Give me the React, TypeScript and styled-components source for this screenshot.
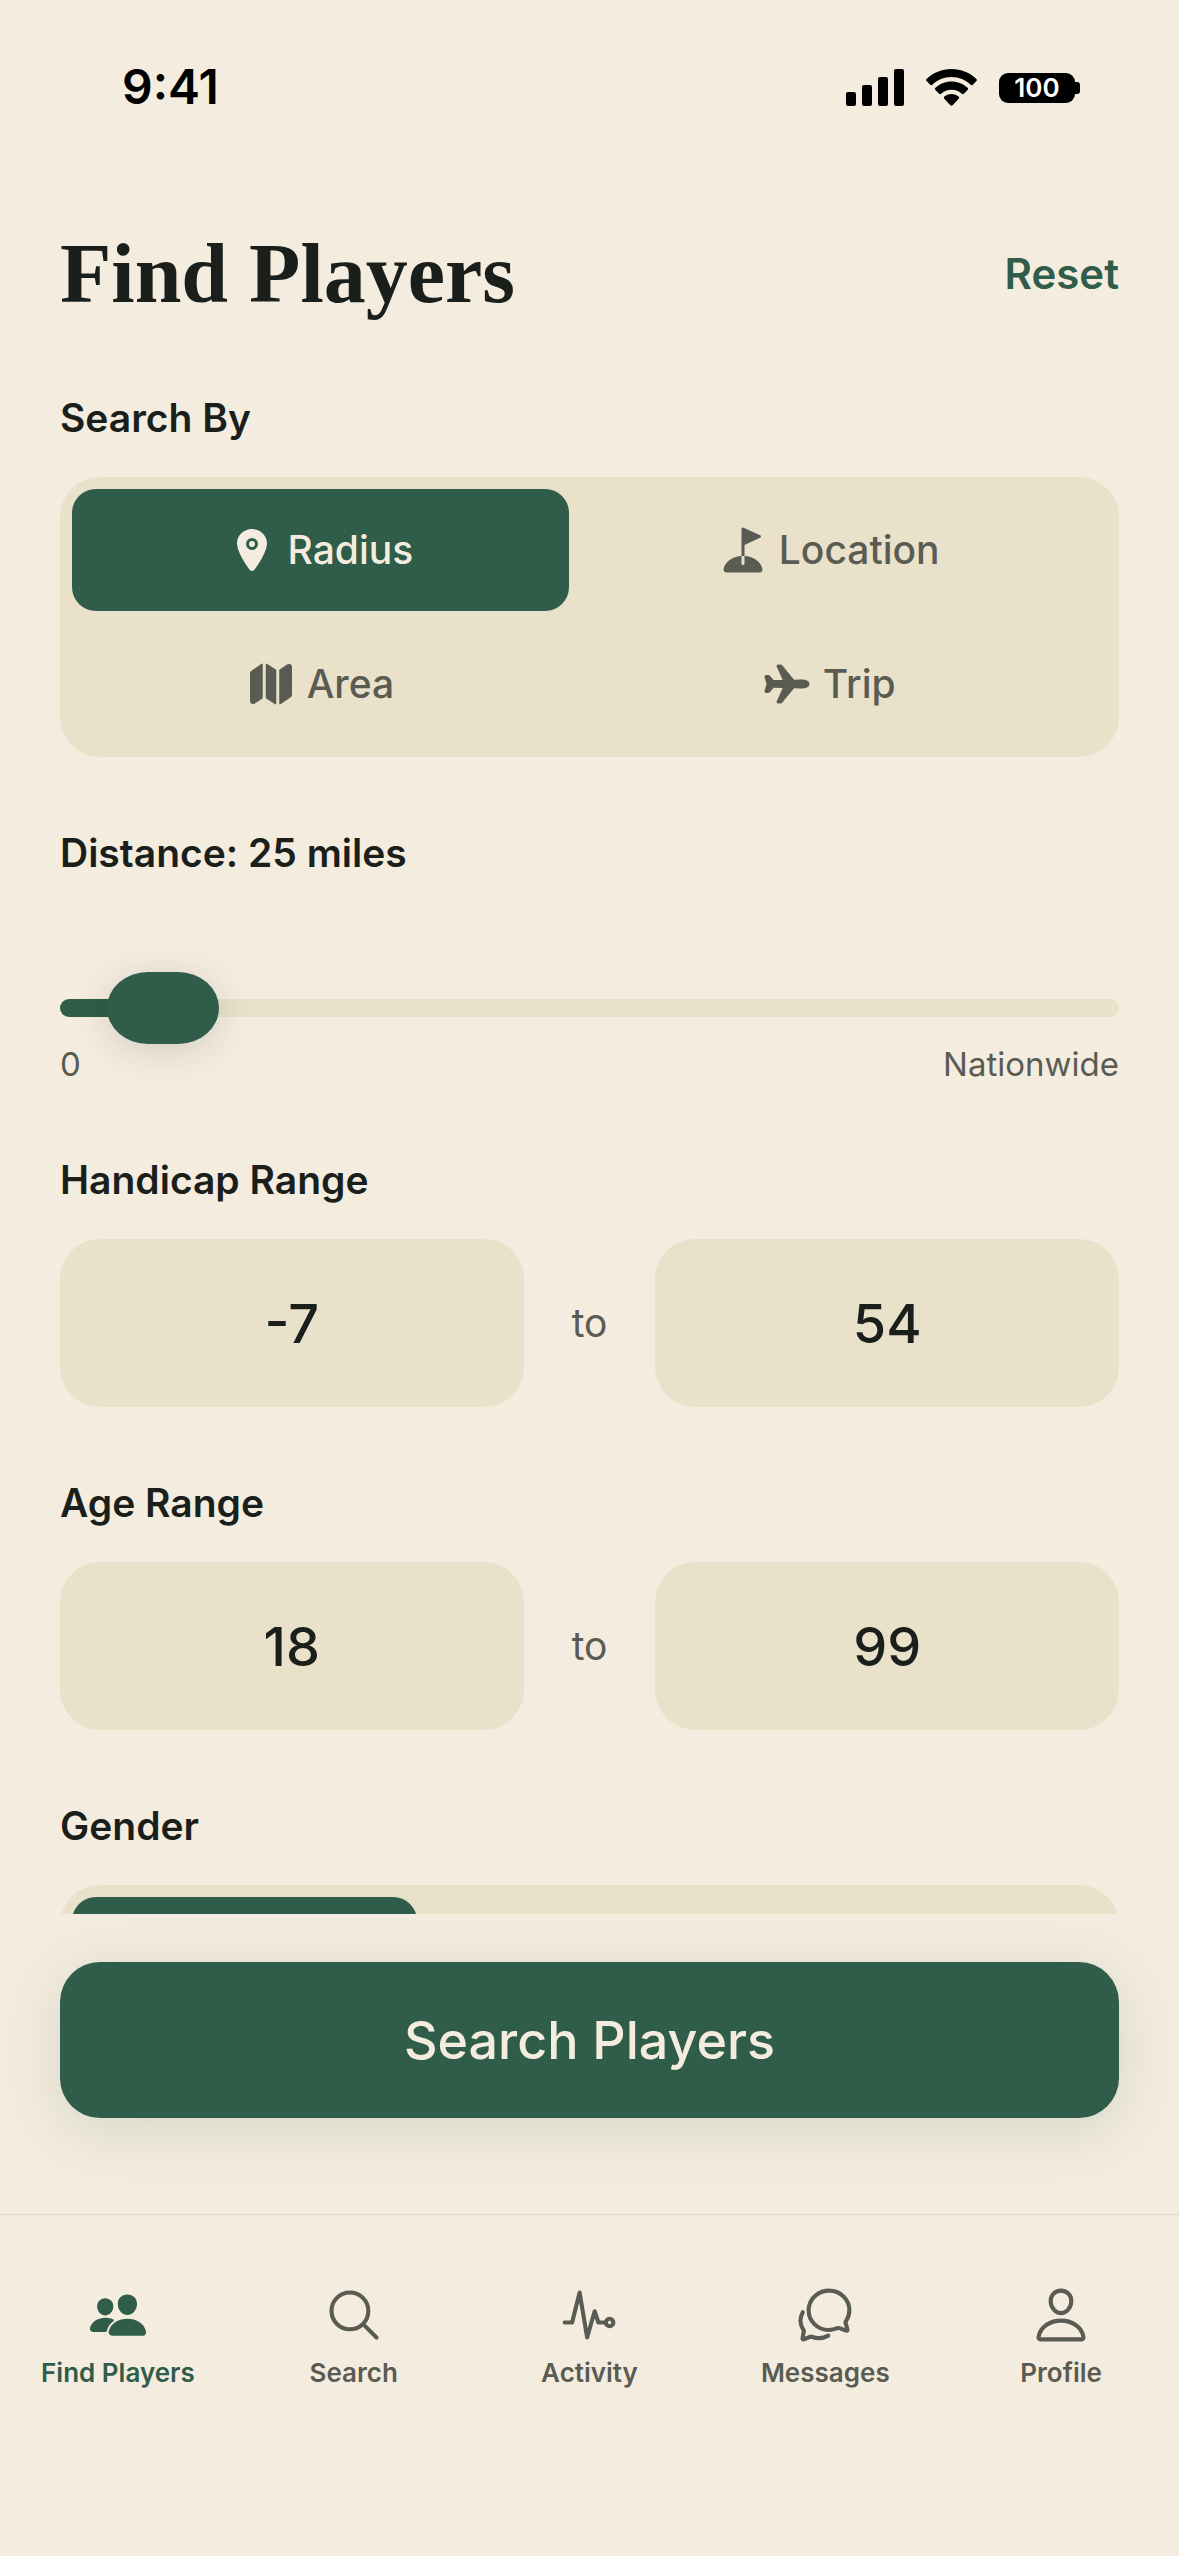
import React, { useId, useState } from "react";
import styled, { createGlobalStyle, css } from "styled-components";
import type { IconType } from "react-icons";
import {
  IoAirplane,
  IoChatbubblesOutline,
  IoGolf,
  IoLocation,
  IoMap,
  IoPeople,
  IoPersonOutline,
  IoPulseOutline,
  IoSearchOutline,
} from "react-icons/io5";

const color = {
  page: "#f4eddf",
  sand: "#e9e1ca",
  green: "#305d4a",
  ink: "#1b1f1c",
  muted: "#5a5b52",
  line: "#e0d8ca",
};

const sans = `Inter, "Liberation Sans", sans-serif`;
const serif = `"Liberation Serif", serif`;

const GlobalStyle = createGlobalStyle`
  *, *::before, *::after { box-sizing: border-box; }
  body {
    margin: 0;
    background: ${color.page};
    color: ${color.ink};
    font-family: ${sans};
  }
  button, input { font: inherit; color: inherit; }
`;

const Screen = styled.div`
  display: flex;
  flex-direction: column;
  height: 100vh;
  overflow: hidden;
`;

const StatusBar = styled.header`
  display: flex;
  flex: none;
  align-items: center;
  justify-content: space-between;
  height: 176px;
  padding: 0 99px 0 122px;
  color: #000;
`;

const Time = styled.time`
  padding-bottom: 2px;
  font-size: 48px;
  font-weight: 600;
  line-height: 56px;
`;

const StatusIcons = styled.div`
  display: flex;
  align-items: center;
  gap: 22px;
`;

const Battery = styled.div`
  display: flex;
  align-items: center;
`;

const BatteryBody = styled.span`
  display: flex;
  align-items: center;
  justify-content: center;
  width: 76px;
  height: 30px;
  border-radius: 9px;
  background: #000;
  color: #fff;
  font-size: 26px;
  font-weight: 600;
  line-height: 30px;
`;

const BatteryTip = styled.span`
  width: 5px;
  height: 12px;
  border-radius: 0 3px 3px 0;
  background: #000;
`;

const Scroller = styled.main`
  flex: 1;
  min-height: 0;
  overflow: hidden;
  padding: 48px 60px 0;
`;

const TitleRow = styled.div`
  display: flex;
  align-items: center;
  justify-content: space-between;
  height: 100px;
  margin-bottom: 70px;
`;

const Title = styled.h1`
  margin: 0;
  font-family: ${serif};
  font-size: 84px;
  font-weight: 700;
  line-height: 100px;
`;

const ResetButton = styled.button`
  padding: 0;
  border: 0;
  background: none;
  color: ${color.green};
  font-size: 42px;
  font-weight: 600;
  line-height: 52px;
`;

const Section = styled.section`
  margin-bottom: 72px;
`;

const labelText = css`
  display: block;
  margin: 0 0 35px;
  font-size: 39px;
  font-weight: 600;
  line-height: 48px;
`;

const SectionTitle = styled.h2`
  ${labelText}
`;

const SliderLabel = styled.label`
  ${labelText}
`;

const Segments = styled.div`
  display: flex;
  flex-wrap: wrap;
  gap: 12px;
  padding: 12px;
  border-radius: 40px;
  background: ${color.sand};
`;

const Segment = styled.button<{ $active?: boolean; $width: string }>`
  display: flex;
  align-items: center;
  justify-content: center;
  gap: 12px;
  width: ${(p) => p.$width};
  height: 122px;
  padding: 0;
  border: 0;
  border-radius: 24px;
  background: ${(p) => (p.$active ? color.green : "transparent")};
  color: ${(p) => (p.$active ? color.page : color.muted)};
  font-size: 39px;
  font-weight: 500;
  line-height: 48px;

  svg {
    width: 48px;
    height: 48px;
  }
`;

const SliderBody = styled.div`
  padding-top: 60px;
`;

const Slider = styled.input<{ $fill: number }>`
  display: block;
  appearance: none;
  width: 100%;
  height: 72px;
  margin: 0;
  background: none;

  &::-webkit-slider-runnable-track {
    height: 18px;
    border-radius: 9px;
    background: linear-gradient(
      to right,
      ${color.green} ${(p) => p.$fill}%,
      ${color.sand} ${(p) => p.$fill}%
    );
  }

  &::-webkit-slider-thumb {
    appearance: none;
    width: 112px;
    height: 72px;
    margin-top: -27px;
    border-radius: 41px / 36px;
    background: ${color.green};
    box-shadow: 0 6px 36px rgba(0, 0, 0, 0.14);
  }
`;

const SliderEnds = styled.div`
  display: flex;
  justify-content: space-between;
  color: ${color.muted};
  font-size: 33px;
  line-height: 40px;
`;

const RangeRow = styled.div`
  display: flex;
  align-items: center;
  gap: 48px;
`;

const RangeInput = styled.input`
  flex: 1;
  min-width: 0;
  height: 168px;
  padding: 0;
  border: 0;
  border-radius: 40px;
  background: ${color.sand};
  font-size: 54px;
  font-weight: 500;
  text-align: center;
`;

const RangeWord = styled.span`
  color: ${color.muted};
  font-size: 39px;
  line-height: 48px;
`;

const ActionBar = styled.div`
  position: relative;
  flex: none;
  padding: 48px 60px 96px;
  background: ${color.page};
`;

const SearchButton = styled.button`
  width: 100%;
  height: 156px;
  border: 0;
  border-radius: 40px;
  background: ${color.green};
  box-shadow: 0 12px 60px rgba(48, 93, 74, 0.16);
  color: ${color.page};
  font-size: 52px;
  font-weight: 500;
`;

const TabBar = styled.nav`
  display: flex;
  flex: none;
  height: 342px;
  padding-top: 70px;
  border-top: 1px solid ${color.line};
  background: ${color.page};
`;

const Tab = styled.a<{ $active?: boolean }>`
  display: flex;
  flex: 1;
  flex-direction: column;
  align-items: center;
  gap: 10px;
  color: ${(p) => (p.$active ? color.green : color.muted)};
  font-size: 26px;
  font-weight: 600;
  line-height: 36px;
  text-decoration: none;

  svg {
    width: 60px;
    height: 60px;
  }

  svg [fill="none"] {
    stroke-width: 35px;
  }
`;

const SignalIcon = () => (
  <svg width="58" height="38" viewBox="0 0 58 38" aria-hidden="true">
    <rect x="0" y="23" width="10" height="14" rx="2" />
    <rect x="16" y="16" width="10" height="21" rx="2" />
    <rect x="32" y="8" width="10" height="29" rx="2" />
    <rect x="48" y="0" width="10" height="37" rx="2" />
  </svg>
);

const WifiIcon = () => (
  <svg width="51" height="38" viewBox="0 0 51 38" aria-hidden="true">
    <path d="M25.500 0C15.800 0 7 3.800.6 10a1.500 1.500 0 0 0 0 2.100l3.600 3.600c.6.600 1.500.6 2.100 0C11.300 10.900 18 8 25.500 8s14.200 2.900 19.200 7.700c.6.600 1.500.6 2.100 0l3.600-3.600a1.500 1.500 0 0 0 0-2.100C44 3.800 35.200 0 25.500 0Z" />
    <path d="M25.500 12.500c-6.200 0-11.900 2.400-16.100 6.300a1.500 1.500 0 0 0 0 2.200l3.700 3.700c.6.600 1.500.6 2.100 0 2.700-2.500 6.300-4 10.300-4s7.600 1.500 10.300 4c.6.600 1.500.6 2.100 0l3.700-3.700c.6-.6.600-1.600 0-2.200-4.200-3.900-9.900-6.300-16.100-6.300Z" />
    <path d="M25.500 25c-2.700 0-5.200 1-7.100 2.600-.7.600-.7 1.600-.1 2.200l6.100 6.500c.6.600 1.600.6 2.200 0l6.100-6.500c.6-.6.600-1.600-.1-2.200C30.700 26 28.200 25 25.500 25Z" />
  </svg>
);

const modes: { name: string; Icon: IconType }[] = [
  { name: "Radius", Icon: IoLocation },
  { name: "Location", Icon: IoGolf },
  { name: "Area", Icon: IoMap },
  { name: "Trip", Icon: IoAirplane },
];

const tabs: { name: string; Icon: IconType }[] = [
  { name: "Find Players", Icon: IoPeople },
  { name: "Search", Icon: IoSearchOutline },
  { name: "Activity", Icon: IoPulseOutline },
  { name: "Messages", Icon: IoChatbubblesOutline },
  { name: "Profile", Icon: IoPersonOutline },
];

const MAX_MILES = 500;

function RangeField({ title, min, max }: { title: string; min: string; max: string }) {
  return (
    <Section>
      <SectionTitle>{title}</SectionTitle>
      <RangeRow>
        <RangeInput aria-label={`${title} from`} inputMode="numeric" defaultValue={min} />
        <RangeWord>to</RangeWord>
        <RangeInput aria-label={`${title} to`} inputMode="numeric" defaultValue={max} />
      </RangeRow>
    </Section>
  );
}

export default function App() {
  const sliderId = useId();
  const [mode, setMode] = useState("Radius");
  const [miles, setMiles] = useState(25);

  return (
    <Screen>
      <GlobalStyle />
      <StatusBar>
        <Time>9:41</Time>
        <StatusIcons>
          <SignalIcon />
          <WifiIcon />
          <Battery>
            <BatteryBody>100</BatteryBody>
            <BatteryTip />
          </Battery>
        </StatusIcons>
      </StatusBar>

      <Scroller>
        <TitleRow>
          <Title>Find Players</Title>
          <ResetButton type="button" onClick={() => setMiles(25)}>
            Reset
          </ResetButton>
        </TitleRow>

        <Section>
          <SectionTitle>Search By</SectionTitle>
          <Segments>
            {modes.map(({ name, Icon }) => (
              <Segment
                key={name}
                type="button"
                $width="48%"
                $active={mode === name}
                aria-pressed={mode === name}
                onClick={() => setMode(name)}
              >
                <Icon aria-hidden="true" />
                {name}
              </Segment>
            ))}
          </Segments>
        </Section>

        <Section>
          <SliderLabel htmlFor={sliderId}>Distance: {miles} miles</SliderLabel>
          <SliderBody>
            <Slider
              id={sliderId}
              type="range"
              min={0}
              max={MAX_MILES}
              value={miles}
              $fill={5 + (miles / MAX_MILES) * 90}
              onChange={(e) => setMiles(Number(e.target.value))}
            />
            <SliderEnds>
              <span>0</span>
              <span>Nationwide</span>
            </SliderEnds>
          </SliderBody>
        </Section>

        <RangeField title="Handicap Range" min="-7" max="54" />
        <RangeField title="Age Range" min="18" max="99" />

        <Section>
          <SectionTitle>Gender</SectionTitle>
          <Segments>
            <Segment type="button" $width="calc(100% / 3)" $active aria-pressed="true" aria-label="Any gender" />
          </Segments>
        </Section>
      </Scroller>

      <ActionBar>
        <SearchButton type="button">Search Players</SearchButton>
      </ActionBar>

      <TabBar>
        {tabs.map(({ name, Icon }, i) => (
          <Tab key={name} href="#" $active={i === 0} aria-current={i === 0 ? "page" : undefined}>
            <Icon aria-hidden="true" />
            {name}
          </Tab>
        ))}
      </TabBar>
    </Screen>
  );
}
